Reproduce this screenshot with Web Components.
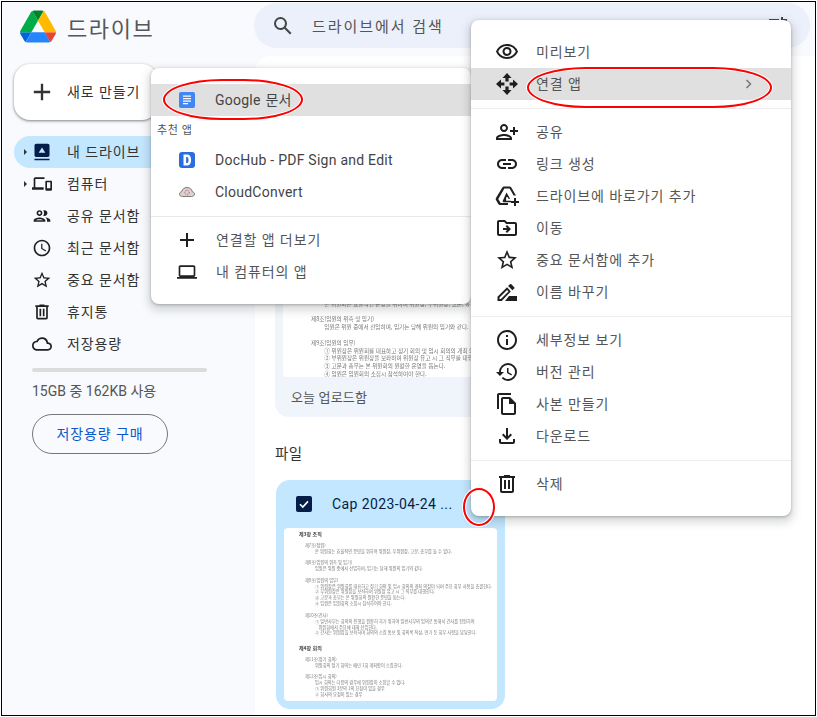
<!DOCTYPE html>
<html lang="ko">
<head>
<meta charset="utf-8">
<title>드라이브</title>
<style>
    html, body { margin: 0; padding: 0; background: #fff; }
    body { padding: 1px; font-family: Roboto, "Noto Sans CJK KR", sans-serif; color: #1f1f1f; }
</style>
</head>
<body>
<drive-app>
    <drive-sidebar slot="side"></drive-sidebar>
    <drive-main slot="main"></drive-main>
</drive-app>

<script>
const ICONS = {
    search: 'M20.49 19l-5.73-5.73C15.53 12.2 16 10.91 16 9.5A6.5 6.5 0 1 0 9.5 16c1.41 0 2.7-.47 3.77-1.24L19 20.49 20.49 19zM5 9.5C5 7.01 7.01 5 9.5 5S14 7.01 14 9.5 11.99 14 9.5 14 5 11.99 5 9.5z',
    tune: 'M3 17v2h6v-2H3zM3 5v2h10V5H3zm10 16v-2h8v-2h-8v-2h-2v6h2zM7 9v2H3v2h4v2h2V9H7zm14 4v-2H11v2h10zm-6-4h2V7h4V5h-4V3h-2v6z',
    add: 'M19 13h-6v6h-2v-6H5v-2h6V5h2v6h6v2z',
    laptop: 'M20 18c1.1 0 1.99-.9 1.99-2L22 6c0-1.1-.9-2-2-2H4c-1.1 0-2 .9-2 2v10c0 1.1.9 2 2 2H0v2h24v-2h-4zM4 6h16v10H4V6z',
    mydrive: 'M19 2H5a2 2 0 0 0-2 2v12a2 2 0 0 0 2 2h14a2 2 0 0 0 2-2V4a2 2 0 0 0-2-2zm-7 4.5 4 6.5H8l4-6.5zM3 20h18v2H3z',
    devices: 'M4 6h11V4H4c-1.1 0-2 .9-2 2v10H0v3h14v-3H4V6zm19 2h-6c-.55 0-1 .45-1 1v10c0 .55.45 1 1 1h6c.55 0 1-.45 1-1V9c0-.55-.45-1-1-1zm-1 9h-4v-7h4v7z',
    people: 'M9 13.75c-2.34 0-7 1.17-7 3.5V19h14v-1.75c0-2.33-4.66-3.5-7-3.5zM4.34 17c.84-.58 2.87-1.25 4.66-1.25s3.82.67 4.66 1.25H4.34zM9 12c1.93 0 3.5-1.57 3.5-3.5S10.93 5 9 5 5.5 6.57 5.5 8.5 7.07 12 9 12zm0-5c.83 0 1.5.67 1.5 1.5S9.83 10 9 10s-1.5-.67-1.5-1.5S8.17 7 9 7zm7.04 6.81c1.16.84 1.96 1.96 1.96 3.44V19h4v-1.75c0-2.02-3.5-3.17-5.96-3.44zM15 12c1.93 0 3.5-1.57 3.5-3.5S16.93 5 15 5c-.54 0-1.04.13-1.5.35.63.89 1 1.98 1 3.15s-.37 2.26-1 3.15c.46.22.96.35 1.5.35z',
    schedule: 'M11.99 2C6.47 2 2 6.48 2 12s4.47 10 9.99 10C17.52 22 22 17.52 22 12S17.52 2 11.99 2zM12 20c-4.42 0-8-3.58-8-8s3.58-8 8-8 8 3.58 8 8-3.58 8-8 8zm.5-13H11v6l5.25 3.15.75-1.23-4.5-2.67z',
    star: 'M22 9.24l-7.19-.62L12 2 9.19 8.63 2 9.24l5.46 4.73L5.82 21 12 17.27 18.18 21l-1.63-7.03L22 9.24zM12 15.4l-3.76 2.27 1-4.28-3.32-2.88 4.38-.38L12 6.1l1.71 4.04 4.38.38-3.32 2.88 1 4.28L12 15.4z',
    trash: 'M15 4V3H9v1H4v2h1v13c0 1.1.9 2 2 2h10c1.1 0 2-.9 2-2V6h1V4h-5zm2 15H7V6h10v13zM9 8h2v9H9zm4 0h2v9h-2z',
    cloud: 'M19.35 10.04A7.49 7.49 0 0 0 12 4C9.11 4 6.6 5.64 5.35 8.04A5.994 5.994 0 0 0 0 14c0 3.31 2.69 6 6 6h13c2.76 0 5-2.24 5-5 0-2.64-2.05-4.78-4.65-4.96zM19 18H6c-2.21 0-4-1.79-4-4 0-2.05 1.53-3.76 3.56-3.97l1.07-.11.5-.95A5.469 5.469 0 0 1 12 6c2.62 0 4.88 1.86 5.39 4.43l.3 1.5 1.53.11A2.98 2.98 0 0 1 22 15c0 1.65-1.35 3-3 3z',
    eye: 'M12 6a9.77 9.77 0 0 1 8.82 5.5C19.17 14.87 15.79 17 12 17s-7.17-2.13-8.82-5.5A9.77 9.77 0 0 1 12 6m0-2C7 4 2.73 7.11 1 11.5 2.73 15.89 7 19 12 19s9.27-3.11 11-7.5C21.27 7.11 17 4 12 4zm0 5a2.5 2.5 0 0 1 0 5 2.5 2.5 0 0 1 0-5m0-2c-2.48 0-4.5 2.02-4.5 4.5S9.52 16 12 16s4.5-2.02 4.5-4.5S14.48 7 12 7z',
    openwith: 'M12 1l4.500 5h-2.900v3.400h-3.200V6H7.500zM1 12l5-4.500v2.900h3.400v3.200H6v2.900zM23 12l-5 4.500v-2.900h-3.400v-3.200H18V7.500zM12 23l-4.500-5h2.900v-3.400h3.200V18h2.900z',
    personadd: 'M9 12c2.21 0 4-1.79 4-4s-1.79-4-4-4-4 1.79-4 4 1.79 4 4 4zm0-6c1.1 0 2 .9 2 2s-.9 2-2 2-2-.9-2-2 .9-2 2-2zm0 8c-2.67 0-8 1.34-8 4v2h16v-2c0-2.66-5.33-4-8-4zm-6 4c.2-.71 3.3-2 6-2 2.69 0 5.78 1.28 6 2H3zm17-3v-3h3v-2h-3V7h-2v3h-3v2h3v3h2z',
    link: 'M17 7h-4v2h4c1.65 0 3 1.35 3 3s-1.35 3-3 3h-4v2h4c2.76 0 5-2.24 5-5s-2.24-5-5-5zm-6 8H7c-1.65 0-3-1.35-3-3s1.35-3 3-3h4V7H7c-2.76 0-5 2.24-5 5s2.24 5 5 5h4v-2zm-3-4h8v2H8z',
    shortcut: 'M9 2.500h5.600c.7 0 1.350.37 1.700 1l4.600 8h-2.300L14.600 4.500H9.400L3.300 15l2.300 4H13v2H5c-.7 0-1.350-.37-1.720-1l-2.300-4c-.35-.62-.35-1.380 0-2L7.300 3.500c.35-.62 1-1 1.700-1zM11.500 8.500l3.600 6.200h-2v-1.500h-2v3.500H16v1.500H8.400c-.6 0-1-.7-.7-1.200zM19 14h2v3h3v2h-3v3h-2v-3h-3v-2h3z',
    move: 'M20 6h-8l-2-2H4c-1.1 0-2 .9-2 2v12c0 1.1.9 2 2 2h16c1.1 0 2-.9 2-2V8c0-1.1-.9-2-2-2zm0 12H4V6h5.17l2 2H20v10zm-7.84-6H8v2h4.16l-1.59 1.59L12 17l4-4-4-4-1.41 1.41L12.16 12z',
    rename: 'M14 16l-4 5h12v-5zM12.06 7.19L2.500 16.750V21h4.250l9.060-9.560-3.750-4.250zM5.920 19H4.500v-1.420l7.560-7.560 1.420 1.420L5.920 19zM19.210 8.540c.39-.39.39-1.020 0-1.410l-2.840-2.840a1 1 0 0 0-1.410 0l-1.830 1.830 4.250 4.250 1.830-1.830z',
    info: 'M11 7h2v2h-2zm0 4h2v6h-2zm1-9C6.48 2 2 6.48 2 12s4.48 10 10 10 10-4.48 10-10S17.52 2 12 2zm0 18c-4.41 0-8-3.59-8-8s3.59-8 8-8 8 3.59 8 8-3.59 8-8 8z',
    history: 'M13 3a9 9 0 0 0-9 9H1l3.89 3.89.07.14L9 12H6c0-3.87 3.13-7 7-7s7 3.13 7 7-3.13 7-7 7c-1.93 0-3.68-.79-4.94-2.06l-1.42 1.42A8.954 8.954 0 0 0 13 21a9 9 0 0 0 0-18zm-1 5v5l4.28 2.54.72-1.21-3.5-2.08V8H12z',
    copy: 'M16 1H4c-1.1 0-2 .9-2 2v14h2V3h12V1zm-1 4H8c-1.1 0-1.99.9-1.99 2L6 21c0 1.1.89 2 1.99 2H19c1.1 0 2-.9 2-2V11l-6-6zM8 21V7h6v5h5v9H8z',
    download: 'M18 15v3H6v-3H4v3c0 1.1.9 2 2 2h12c1.1 0 2-.9 2-2v-3h-2zm-1-4l-1.41-1.41L13 12.17V4h-2v8.17L8.41 9.59 7 11l5 5 5-5z'
};

class GIcon extends HTMLElement {
    connectedCallback() {
        const size = this.getAttribute('size') || 24;
        this.attachShadow({ mode: 'open' });
        this.shadowRoot.innerHTML = `
            <style>
                :host { display: flex; align-items: center; justify-content: center; width: 24px; height: 24px; flex: none; color: inherit; }
                svg { display: block; fill: currentColor; flex: none; }
            </style>
            <svg width="${size}" height="${size}" viewBox="0 0 24 24"><path fill-rule="evenodd" d="${ICONS[this.getAttribute('name')]}"/></svg>
        `;
    }
}

// frame with the black line round the capture
class DriveApp extends HTMLElement {
    connectedCallback() {
        this.attachShadow({ mode: 'open' });
        this.shadowRoot.innerHTML = `
            <style>
                :host { display: block; width: 815px; height: 715px; box-sizing: border-box; border: 1px solid #000; position: relative; overflow: hidden; background: #f8fafd; }
                .shell { display: grid; grid-template-columns: 253px 1fr; grid-template-rows: 54px 1fr; height: 100%; }
                header { grid-column: 1 / 3; display: flex; align-items: flex-start; }
                .brand { width: 252px; height: 54px; display: flex; align-items: center; gap: 11px; padding-left: 18px; box-sizing: border-box; padding-bottom: 5px; }
                .brand span { font-size: 22px; letter-spacing: 1.6px; color: #55585a; font-family: "Noto Sans CJK KR", sans-serif; }
                .search { flex: 1; height: 45px; margin: 1px 5px 0 0; background: #ebf0fa; border-radius: 24px; display: flex; align-items: center; padding: 0 20px 0 17px; color: #444746; }
                .search span { margin-left: 17px; padding-bottom: 1px; font-size: 15px; letter-spacing: 1.95px; flex: 1; color: #555; }
            </style>
            <div class="shell">
                <header>
                    <div class="brand">
                        <svg width="36" height="33" viewBox="0 0 87.3 78">
                            <path d="m6.6 66.85 3.85 6.65c.8 1.4 1.95 2.5 3.3 3.3l13.75-23.8h-27.5c0 1.55.4 3.1 1.2 4.5z" fill="#0066da"/>
                            <path d="m43.65 25-13.75-23.8c-1.35.8-2.5 1.9-3.3 3.3l-25.4 44a9.06 9.06 0 0 0 -1.2 4.5h27.5z" fill="#00ac47"/>
                            <path d="m73.55 76.8c1.35-.8 2.5-1.9 3.3-3.3l1.6-2.75 7.65-13.25c.8-1.4 1.2-2.95 1.2-4.5h-27.502l5.852 11.5z" fill="#ea4335"/>
                            <path d="m43.65 25 13.75-23.8c-1.35-.8-2.9-1.2-4.5-1.2h-18.5c-1.6 0-3.15.45-4.5 1.2z" fill="#00832d"/>
                            <path d="m59.8 53h-32.3l-13.75 23.8c1.35.8 2.9 1.2 4.5 1.2h50.8c1.6 0 3.15-.45 4.5-1.2z" fill="#2684fc"/>
                            <path d="m73.4 26.5-12.7-22c-.8-1.4-1.95-2.5-3.3-3.3l-13.75 23.8 16.15 28h27.45c0-1.55-.4-3.1-1.2-4.5z" fill="#ffba00"/>
                        </svg>
                        <span>드라이브</span>
                    </div>
                    <div class="search">
                        <g-icon name="search"></g-icon>
                        <span>드라이브에서 검색</span>
                        <g-icon name="tune"></g-icon>
                    </div>
                </header>
                <slot name="side"></slot>
                <slot name="main"></slot>
            </div>

            <new-menu></new-menu>
            <context-menu></context-menu>

            <red-mark style="left:161px;top:77px;width:140px;height:41px;border-radius:42%/50%"></red-mark>
            <red-mark style="left:525px;top:65px;width:245px;height:41px;border-radius:24%/50%"></red-mark>
            <red-mark style="left:461px;top:486px;width:32px;height:38px"></red-mark>
        `;
    }
}

class RedMark extends HTMLElement {
    connectedCallback() {
        this.attachShadow({ mode: 'open' });
        this.shadowRoot.innerHTML = `
            <style>
                :host { display: block; position: absolute; box-sizing: border-box; border: 2.5px solid #f00; border-radius: 50%; box-shadow: 0 0 0 1px #fff, inset 0 0 0 1px #fff; }
            </style>
        `;
    }
}

class NavItem extends HTMLElement {
    connectedCallback() {
        const arrow = this.hasAttribute('arrow');
        this.attachShadow({ mode: 'open' });
        this.shadowRoot.innerHTML = `
            <style>
                :host { display: flex; align-items: center; height: 32px; border-radius: 16px; padding-left: 9px; color: #1f1f1f; }
                :host([active]) { background: #c2e7ff; color: #041e49; }
                .arrow { width: 7px; height: 7px; flex: none; }
                .arrow i { display: block; width: 0; height: 0; margin: 0 0 0 1px; border-left: 3.5px solid #333; border-top: 3.5px solid transparent; border-bottom: 3.5px solid transparent; }
                .label { margin-left: 13px; padding-bottom: 2px; font-size: 14px; letter-spacing: .9px; white-space: nowrap; color: #333; }
            </style>
            <div class="arrow">${arrow ? '<i></i>' : ''}</div>
            <slot name="icon"></slot>
            <div class="label"><slot></slot></div>
        `;
    }
}

class DriveSidebar extends HTMLElement {
    connectedCallback() {
        this.attachShadow({ mode: 'open' });
        this.shadowRoot.innerHTML = `
            <style>
                :host { display: block; padding: 8px 12px 0 12px; font-size: 14px; letter-spacing: .9px; }
                .new { width: 144px; height: 56px; box-sizing: border-box; background: #fff; border-radius: 16px; display: flex; align-items: center; padding-left: 16px; gap: 13px; box-shadow: 0 1px 2px rgba(0,0,0,.3), 0 1px 3px 1px rgba(0,0,0,.15); color: #333; }
                .new span { padding-bottom: 2px; }
                nav { display: flex; flex-direction: column; width: 228px; margin-top: 16px; }
                .bar { width: 175px; height: 4px; border-radius: 2px; background: #dcdcdc; margin: 8px 0 0 18px; }
                .used { margin: 10px 0 0 18px; font-size: 14px; letter-spacing: 0; line-height: 18px; color: #555; }
                .buy { width: 136px; height: 40px; box-sizing: border-box; margin: 14px 0 0 18px; padding-bottom: 2px; border: 1px solid #747775; border-radius: 20px; display: flex; align-items: center; justify-content: center; color: #0b57d0; }
            </style>
            <div class="new">
                <g-icon name="add" size="28"></g-icon>
                <span>새로 만들기</span>
            </div>
            <nav>
                <nav-item active arrow><g-icon slot="icon" name="mydrive" size="20" style="color:#041e49"></g-icon>내 드라이브</nav-item>
                <nav-item arrow><g-icon slot="icon" name="devices" size="20"></g-icon>컴퓨터</nav-item>
                <nav-item><g-icon slot="icon" name="people" size="20"></g-icon>공유 문서함</nav-item>
                <nav-item><g-icon slot="icon" name="schedule" size="20"></g-icon>최근 문서함</nav-item>
                <nav-item><g-icon slot="icon" name="star" size="20"></g-icon>중요 문서함</nav-item>
                <nav-item><g-icon slot="icon" name="trash" size="20"></g-icon>휴지통</nav-item>
                <nav-item><g-icon slot="icon" name="cloud" size="20"></g-icon>저장용량</nav-item>
            </nav>
            <div class="bar"></div>
            <div class="used">15GB 중 162KB 사용</div>
            <div class="buy">저장용량 구매</div>
        `;
    }
}

const DOC_LINES = [
    ['h', '제3장 조직'], ['b', ''],
    ['s', '제7조(정원)'],
    ['t', '본 위원회는 효율적인 운영을 위하여 위원장, 부위원장, 고문, 총무를 둘 수 있다.'], ['b', ''],
    ['s', '제8조(임원의 위촉 및 임기)'],
    ['t', '임원은 위원 중에서 선임하며, 임기는 당해 위원의 임기와 같다.'], ['b', ''],
    ['s', '제9조(임원의 임무)'],
    ['t', '① 위원장은 위원회를 대표하고 정기 회의 및 임시 회의의 개최 의장이 되며 주요 회무 사항을 총괄한다.'],
    ['t', '② 부위원장은 위원장을 보좌하며 위원장 유고 시 그 직무를 대행한다.'],
    ['t', '③ 고문과 총무는 본 위원회의 원활한 운영을 돕는다.'],
    ['t', '④ 임원은 임원회의 소집시 참석하여야 한다.'], ['b', ''],
    ['s', '제10조(간사)'],
    ['t', '① 일반사무는 회의의 진행을 원활히 하기 위하여 일반사무의 임의로 통해서 간사를 전원하여'],
    ['u', '위원회에서 주요에 대해 선임한다.'],
    ['t', '② 간사는 위원장을 보좌하며 회의의 소집 통보 및 회의록 작성, 연기 등 회무 사항을 담당한다.'],
    ['b', ''], ['h h2', '제4장 회의'], ['b', ''],
    ['s', '제11조(정기 회의)'],
    ['t', '위원회의 정기 회의는 매년 1회 개최함이 소집한다.'], ['b', ''],
    ['s', '제12조(임시 회의)'],
    ['t', '임시 회의는 다음의 경우에 위원장이 소집할 수 있다.'],
    ['t', '① 위원회원 3분의 1의 요청이 있을 경우'],
    ['t', '② 회사의 요청이 있는 경우']
];

class DocThumb extends HTMLElement {
    connectedCallback() {
        const count = parseInt(this.getAttribute('lines')) || DOC_LINES.length;
        this.attachShadow({ mode: 'open' });
        this.shadowRoot.innerHTML = `
            <style>
                :host { --u: 5px; display: block; background: #fff; overflow: hidden; border-radius: 3px; font-family: "Noto Sans CJK KR", sans-serif; }
                .page { padding: calc(var(--u) * .6) 0 0 calc(var(--u) * 3); color: #777; filter: blur(.25px); white-space: nowrap; }
                p { margin: 0; height: calc(var(--u) * 1.17); line-height: calc(var(--u) * 1.17); font-size: calc(var(--u) * .84); }
                .h { font-weight: 700; color: #444; font-size: var(--u); }
                .h2 { margin-top: calc(var(--u) * .6); }
                .s { padding-left: calc(var(--u) * 1.2); }
                .t { padding-left: calc(var(--u) * 3.2); }
                .u { padding-left: calc(var(--u) * 3.9); }
            </style>
            <div class="page">${DOC_LINES.slice(0, count).map(([c, t]) => `<p class="${c}">${t}</p>`).join('')}</div>
        `;
    }
}

class DriveMain extends HTMLElement {
    connectedCallback() {
        this.attachShadow({ mode: 'open' });
        this.shadowRoot.innerHTML = `
            <style>
                :host { display: block; background: #fff; border-top-left-radius: 16px; padding: 168px 0 0 20px; overflow: hidden; min-height: 0; }
                .upload { width: 300px; height: 193px; box-sizing: border-box; padding: 48px 0 0; background: #f0f4fb; border-radius: 14px; }
                .upload doc-thumb { --u: 6.67px; margin: 0 8px; height: 105px; box-sizing: border-box; padding-top: 1.5px; }
                .upload div { height: 40px; display: flex; align-items: center; padding: 0 0 2px 16px; box-sizing: border-box; font-size: 13px; letter-spacing: .15px; color: #555; }
                h2 { margin: 0; padding: 28px 0 15px; font-size: 14.5px; letter-spacing: .5px; line-height: 20px; font-weight: 400; color: #333; }
                .file { width: 229px; height: 229px; margin-left: 1px; background: #c2e7ff; border-radius: 14px; }
                .row { height: 48px; display: flex; align-items: center; padding-left: 20px; gap: 20px; color: #041e49; font-size: 14px; letter-spacing: .4px; }
                .check { width: 16px; height: 16px; border-radius: 2px; background: #041e49; display: flex; align-items: center; justify-content: center; }
                .file doc-thumb { margin: 0 8px; height: 173px; border-radius: 4px; }
            </style>
            <section class="upload">
                <doc-thumb lines="13"></doc-thumb>
                <div>오늘 업로드함</div>
            </section>
            <h2>파일</h2>
            <section class="file">
                <div class="row">
                    <span class="check"><svg width="12" height="12" viewBox="0 0 12 12"><path d="M2 6.2 4.8 9 10 3.4" fill="none" stroke="#fff" stroke-width="1.6"/></svg></span>
                    <span>Cap 2023-04-24 ...</span>
                </div>
                <doc-thumb></doc-thumb>
            </section>
        `;
    }
}

class MenuItem extends HTMLElement {
    connectedCallback() {
        this.attachShadow({ mode: 'open' });
        this.shadowRoot.innerHTML = `
            <style>
                :host { display: flex; align-items: center; height: 32px; padding-left: 24px; color: #1f1f1f; }
                :host([hover]) { background: #e0e0e0; }
                .label { margin-left: var(--item-gap, 17px); flex: 1; padding-bottom: 2px; font-size: 14px; letter-spacing: .9px; color: #555; white-space: nowrap; }
                :host([latin]) .label { letter-spacing: .25px; padding-bottom: 0; color: #444; }
                :host([mixed]) .label { letter-spacing: .25px; word-spacing: 1px; color: #444; }
                .chev { display: ${this.hasAttribute('chevron') ? 'block' : 'none'}; margin-right: 39px; }
            </style>
            <slot name="icon"></slot>
            <div class="label"><slot></slot></div>
            <svg class="chev" width="7" height="10" viewBox="0 0 7 10"><path d="M1.5 1 5.5 5 1.5 9" fill="none" stroke="#777" stroke-width="1.5"/></svg>
        `;
    }
}

class MenuBox extends HTMLElement {
    connectedCallback() {
        this.attachShadow({ mode: 'open' });
        this.shadowRoot.innerHTML = `
            <style>
                :host { display: block; box-sizing: border-box; padding: 16px 0; background: #fff; border-radius: 8px; box-shadow: 0 1px 3px rgba(60,64,67,.35), 0 4px 8px 3px rgba(60,64,67,.18); }
            </style>
            <slot></slot>
        `;
    }
}

class NewMenu extends HTMLElement {
    connectedCallback() {
        this.attachShadow({ mode: 'open' });
        this.shadowRoot.innerHTML = `
            <style>
                :host { display: block; position: absolute; left: 149px; top: 66px; width: 320px; --item-gap: 16px; }
                hr { border: 0; height: 1px; background: #e9e9e9; margin: 8px 0 7px; }
                .caption { height: 28px; line-height: 29px; padding-left: 6px; font-size: 11px; letter-spacing: .6px; color: #555; }
                svg { display: block; }
                .ico { width: 24px; height: 24px; display: flex; align-items: center; justify-content: center; flex: none; }
            </style>
            <menu-box>
                <menu-item hover mixed>
                    <span class="ico" slot="icon"><svg width="16" height="16" viewBox="0 0 16 16"><rect width="16" height="16" rx="2" fill="#4285f4"/><path d="M4 4.2h8M4 6.7h8M4 9.2h8M4 11.7h5" stroke="#fff" stroke-width="1.3"/></svg></span>
                    Google 문서
                </menu-item>
                <div class="caption">추천 앱</div>
                <menu-item latin>
                    <span class="ico" slot="icon"><svg width="16" height="16" viewBox="0 0 16 16"><rect width="16" height="16" rx="3" fill="#2a6de0"/><path fill-rule="evenodd" d="M4.5 2.5h3.6c2.6 0 4 2 4 5.5s-1.4 5.5-4 5.5H4.5zm2.6 2.4v6.2h.9c1.100 0 1.500-1.200 1.500-3.100S9.100 4.900 8 4.900z" fill="#fff"/></svg></span>
                    DocHub - PDF Sign and Edit
                </menu-item>
                <menu-item latin>
                    <span class="ico" slot="icon"><svg width="16" height="12" viewBox="0 0 16 12"><path d="M3.600 10.500C1.500 10.500.5 9.400.5 8.100c0-1.300 1-2.200 2.200-2.400C3.100 3.500 5 1.500 8 1.500s4.900 2 5.300 4.200c1.200.2 2.200 1.100 2.200 2.400 0 1.300-1 2.400-3.100 2.400z" fill="#d6d3d3" stroke="#7d7a7a"/><circle cx="8" cy="6.500" r="2.200" fill="none" stroke="#d44" stroke-dasharray="1 1"/></svg></span>
                    CloudConvert
                </menu-item>
                <hr>
                <menu-item><g-icon slot="icon" name="add"></g-icon><span style="margin-left:1px">연결할 앱 더보기</span></menu-item>
                <menu-item><g-icon slot="icon" name="laptop" size="20"></g-icon><span style="margin-left:1px">내 컴퓨터의 앱</span></menu-item>
            </menu-box>
        `;
    }
}

class ContextMenu extends HTMLElement {
    connectedCallback() {
        this.attachShadow({ mode: 'open' });
        this.shadowRoot.innerHTML = `
            <style>
                :host { display: block; position: absolute; left: 469px; top: 18px; width: 320px; }
                hr { border: 0; height: 1px; background: #ececec; margin: 8px 0 7px; }
            </style>
            <menu-box>
                <menu-item><g-icon slot="icon" name="eye"></g-icon>미리보기</menu-item>
                <menu-item hover chevron><g-icon slot="icon" name="openwith"></g-icon>연결 앱</menu-item>
                <hr>
                <menu-item><g-icon slot="icon" name="personadd"></g-icon>공유</menu-item>
                <menu-item><g-icon slot="icon" name="link"></g-icon>링크 생성</menu-item>
                <menu-item><g-icon slot="icon" name="shortcut"></g-icon>드라이브에 바로가기 추가</menu-item>
                <menu-item><g-icon slot="icon" name="move"></g-icon>이동</menu-item>
                <menu-item><g-icon slot="icon" name="star"></g-icon>중요 문서함에 추가</menu-item>
                <menu-item><g-icon slot="icon" name="rename"></g-icon>이름 바꾸기</menu-item>
                <hr>
                <menu-item><g-icon slot="icon" name="info"></g-icon>세부정보 보기</menu-item>
                <menu-item><g-icon slot="icon" name="history"></g-icon>버전 관리</menu-item>
                <menu-item><g-icon slot="icon" name="copy"></g-icon>사본 만들기</menu-item>
                <menu-item><g-icon slot="icon" name="download"></g-icon>다운로드</menu-item>
                <hr>
                <menu-item><g-icon slot="icon" name="trash"></g-icon>삭제</menu-item>
            </menu-box>
        `;
    }
}

customElements.define('g-icon', GIcon);
customElements.define('red-mark', RedMark);
customElements.define('nav-item', NavItem);
customElements.define('doc-thumb', DocThumb);
customElements.define('menu-item', MenuItem);
customElements.define('menu-box', MenuBox);
customElements.define('new-menu', NewMenu);
customElements.define('context-menu', ContextMenu);
customElements.define('drive-sidebar', DriveSidebar);
customElements.define('drive-main', DriveMain);
customElements.define('drive-app', DriveApp);
</script>
</body>
</html>
